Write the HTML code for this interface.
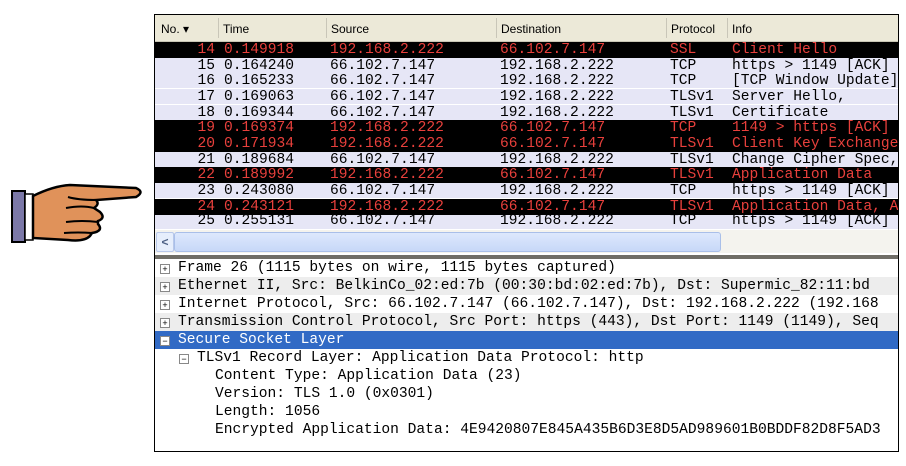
<!DOCTYPE html>
<html><head><meta charset="utf-8"><style>
body{margin:0;width:906px;height:466px;background:#fff;position:relative;overflow:hidden;font-family:"Liberation Mono",monospace}
#win{position:absolute;left:154px;top:14px;width:743px;height:436px;border:1px solid #000;background:#fff;overflow:hidden}
#hdr{position:absolute;left:0;top:0;width:743px;height:26px;background:#ece9d8;border-bottom:1px solid #c8c5b4;font-family:"Liberation Sans",sans-serif;font-size:12px;color:#000}
#hdr span{position:absolute;top:7px}
#hdr i{position:absolute;top:3px;width:1px;height:20px;background:#c9c6b8}
.row{position:absolute;left:0;width:743px;height:15px;font-size:14.6px;line-height:16px;white-space:pre;background:#e6e6f6;color:#000;border-bottom:1px solid #fff;overflow:hidden}
.row.d{background:#000;color:#e8403c;border-bottom:1px solid #000}
.row span{position:absolute;top:0}
.n{right:683px;text-align:right}
#sb{position:absolute;left:0;top:215px;width:743px;height:23px;background:#f4f3ee}
#sbl{position:absolute;left:1px;top:2px;width:16px;height:18px;background:#e6eefc;border:1px solid #b8c8ea;border-radius:2px;color:#4d6185;font-size:12px;line-height:18px;text-align:center;font-family:"Liberation Sans",sans-serif;font-weight:bold}
#thumb{position:absolute;left:19px;top:2px;width:545px;height:18px;background:linear-gradient(#dde8fd,#c7d8f8);border:1px solid #a9bfe9;border-radius:3px}
#sep{position:absolute;left:0;top:240px;width:743px;height:4px;background:#6f6d66}
.dl{position:absolute;left:0;width:743px;height:18px;font-size:14.6px;line-height:18px;white-space:pre;color:#000}
.dl.g{background:#ededed}
.dl.s{background:#316ac5;color:#fff}
.bx{position:absolute;top:5px;width:8px;height:8px;border:1px solid #888;background:#fff;font-family:"Liberation Sans",sans-serif;font-size:9px;line-height:8px;text-align:center;color:#000}
</style></head><body>
<svg style="position:absolute;left:8px;top:182px" width="136" height="64" viewBox="0 0 136 64">
<rect x="4" y="9" width="13" height="51" fill="#7b78a8" stroke="#000" stroke-width="2"/>
<rect x="17" y="12" width="8" height="46" fill="#fff" stroke="#000" stroke-width="1.5"/>
<path d="M25 14 Q45 4 62 3 L128 6 Q137 10 128 15 L88 18 Q92 22 86 26 L92 30 Q98 36 90 39 L90 42 Q96 49 84 51 L82 54 Q76 60 60 58 Q42 57 25 56 Z" fill="#e0925a" stroke="#000" stroke-width="2.5"/>
<path d="M58 26 Q74 23 86 26 M58 40 Q74 38 90 40 M56 51 Q70 50 84 51 M60 15 Q70 18 88 18" fill="none" stroke="#000" stroke-width="2"/>
</svg>
<div id="win">
<div id="hdr"><span style="left:6px">No. ▾</span><i style="left:63px"></i><span style="left:68px">Time</span><i style="left:171px"></i><span style="left:176px">Source</span><i style="left:341px"></i><span style="left:346px">Destination</span><i style="left:511px"></i><span style="left:516px">Protocol</span><i style="left:572px"></i><span style="left:577px">Info</span></div>
<div class="row d" style="top:27px"><span class="n">14</span><span style="left:69px">0.149918</span><span style="left:175px">192.168.2.222</span><span style="left:345px">66.102.7.147</span><span style="left:515px">SSL</span><span style="left:577px">Client Hello</span></div>
<div class="row" style="top:43px"><span class="n">15</span><span style="left:69px">0.164240</span><span style="left:175px">66.102.7.147</span><span style="left:345px">192.168.2.222</span><span style="left:515px">TCP</span><span style="left:577px">https > 1149 [ACK]</span></div>
<div class="row" style="top:58px"><span class="n">16</span><span style="left:69px">0.165233</span><span style="left:175px">66.102.7.147</span><span style="left:345px">192.168.2.222</span><span style="left:515px">TCP</span><span style="left:577px">[TCP Window Update]</span></div>
<div class="row" style="top:74px"><span class="n">17</span><span style="left:69px">0.169063</span><span style="left:175px">66.102.7.147</span><span style="left:345px">192.168.2.222</span><span style="left:515px">TLSv1</span><span style="left:577px">Server Hello,</span></div>
<div class="row" style="top:90px"><span class="n">18</span><span style="left:69px">0.169344</span><span style="left:175px">66.102.7.147</span><span style="left:345px">192.168.2.222</span><span style="left:515px">TLSv1</span><span style="left:577px">Certificate</span></div>
<div class="row d" style="top:105px"><span class="n">19</span><span style="left:69px">0.169374</span><span style="left:175px">192.168.2.222</span><span style="left:345px">66.102.7.147</span><span style="left:515px">TCP</span><span style="left:577px">1149 > https [ACK]</span></div>
<div class="row d" style="top:121px"><span class="n">20</span><span style="left:69px">0.171934</span><span style="left:175px">192.168.2.222</span><span style="left:345px">66.102.7.147</span><span style="left:515px">TLSv1</span><span style="left:577px">Client Key Exchange</span></div>
<div class="row" style="top:137px"><span class="n">21</span><span style="left:69px">0.189684</span><span style="left:175px">66.102.7.147</span><span style="left:345px">192.168.2.222</span><span style="left:515px">TLSv1</span><span style="left:577px">Change Cipher Spec,</span></div>
<div class="row d" style="top:152px"><span class="n">22</span><span style="left:69px">0.189992</span><span style="left:175px">192.168.2.222</span><span style="left:345px">66.102.7.147</span><span style="left:515px">TLSv1</span><span style="left:577px">Application Data</span></div>
<div class="row" style="top:168px"><span class="n">23</span><span style="left:69px">0.243080</span><span style="left:175px">66.102.7.147</span><span style="left:345px">192.168.2.222</span><span style="left:515px">TCP</span><span style="left:577px">https > 1149 [ACK]</span></div>
<div class="row d" style="top:184px"><span class="n">24</span><span style="left:69px">0.243121</span><span style="left:175px">192.168.2.222</span><span style="left:345px">66.102.7.147</span><span style="left:515px">TLSv1</span><span style="left:577px">Application Data, A</span></div>
<div class="row" style="top:200px;height:14px;line-height:12px"><span class="n">25</span><span style="left:69px">0.255131</span><span style="left:175px">66.102.7.147</span><span style="left:345px">192.168.2.222</span><span style="left:515px">TCP</span><span style="left:577px">https > 1149 [ACK]</span></div>
<div id="sb"><div id="sbl">&lt;</div><div id="thumb"></div></div>
<div id="sep"></div>
<div class="dl" style="top:244px"><div class="bx" style="left:5px">+</div><span style="position:absolute;left:23px">Frame 26 (1115 bytes on wire, 1115 bytes captured)</span></div>
<div class="dl g" style="top:262px"><div class="bx" style="left:5px">+</div><span style="position:absolute;left:23px">Ethernet II, Src: BelkinCo_02:ed:7b (00:30:bd:02:ed:7b), Dst: Supermic_82:11:bd</span></div>
<div class="dl" style="top:280px"><div class="bx" style="left:5px">+</div><span style="position:absolute;left:23px">Internet Protocol, Src: 66.102.7.147 (66.102.7.147), Dst: 192.168.2.222 (192.168</span></div>
<div class="dl g" style="top:298px"><div class="bx" style="left:5px">+</div><span style="position:absolute;left:23px">Transmission Control Protocol, Src Port: https (443), Dst Port: 1149 (1149), Seq</span></div>
<div class="dl s" style="top:316px"><div class="bx" style="left:5px">−</div><span style="position:absolute;left:23px">Secure Socket Layer</span></div>
<div class="dl" style="top:334px"><div class="bx" style="left:24px">−</div><span style="position:absolute;left:42px">TLSv1 Record Layer: Application Data Protocol: http</span></div>
<div class="dl" style="top:352px"><span style="position:absolute;left:60px">Content Type: Application Data (23)</span></div>
<div class="dl" style="top:370px"><span style="position:absolute;left:60px">Version: TLS 1.0 (0x0301)</span></div>
<div class="dl" style="top:388px"><span style="position:absolute;left:60px">Length: 1056</span></div>
<div class="dl" style="top:406px"><span style="position:absolute;left:60px">Encrypted Application Data: 4E9420807E845A435B6D3E8D5AD989601B0BDDF82D8F5AD3</span></div>
</div>
</body></html>
